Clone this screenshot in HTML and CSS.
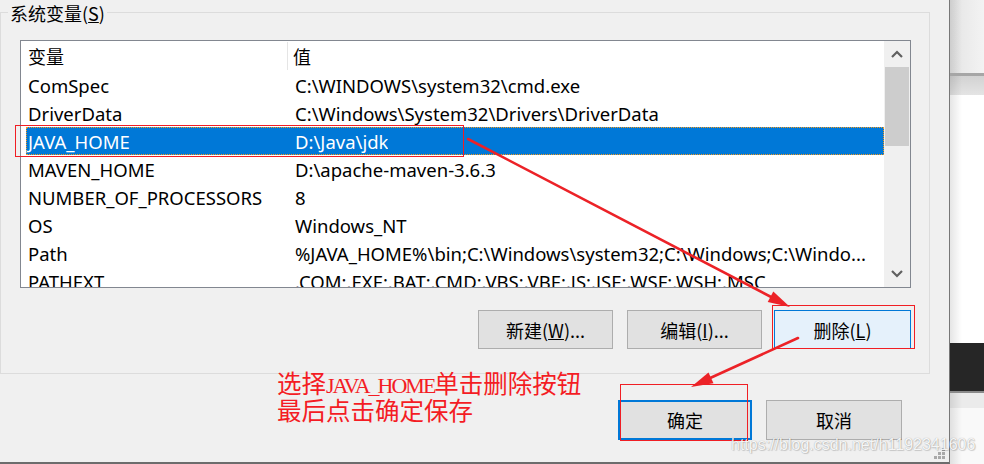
FILE: index.html
```html
<!DOCTYPE html>
<html lang="zh-CN">
<head>
<meta charset="utf-8">
<title>系统变量</title>
<link rel="stylesheet" href="styles.css">
</head>
<body>
<div class="screen">
  <div class="dialog">
    <div class="group">
      <div class="legend">系统变量(<u>S</u>)</div>
      <div class="list">
        <div class="list-body">
          <div class="list-head">
            <div class="hcell c1">变量</div>
            <div class="hcell c2">值</div>
          </div>
          <div class="row"><div class="cell c1">ComSpec</div><div class="cell c2">C:\WINDOWS\system32\cmd.exe</div></div>
          <div class="row"><div class="cell c1">DriverData</div><div class="cell c2">C:\Windows\System32\Drivers\DriverData</div></div>
          <div class="row selected"><div class="cell c1">JAVA_HOME</div><div class="cell c2">D:\Java\jdk</div></div>
          <div class="row"><div class="cell c1">MAVEN_HOME</div><div class="cell c2">D:\apache-maven-3.6.3</div></div>
          <div class="row"><div class="cell c1">NUMBER_OF_PROCESSORS</div><div class="cell c2">8</div></div>
          <div class="row"><div class="cell c1">OS</div><div class="cell c2">Windows_NT</div></div>
          <div class="row"><div class="cell c1">Path</div><div class="cell c2">%JAVA_HOME%\bin;C:\Windows\system32;C:\Windows;C:\Windo...</div></div>
          <div class="row"><div class="cell c1">PATHEXT</div><div class="cell c2">.COM;.EXE;.BAT;.CMD;.VBS;.VBE;.JS;.JSE;.WSF;.WSH;.MSC</div></div>
        </div>
        <div class="vscroll">
          <div class="sb-btn"><svg width="12" height="8" viewBox="0 0 12 8"><polyline points="1,7 6,2 11,7" fill="none" stroke="#606060" stroke-width="2.2"/></svg></div>
          <div class="sb-track"><div class="sb-thumb"></div></div>
          <div class="sb-btn"><svg width="12" height="8" viewBox="0 0 12 8"><polyline points="1,1 6,6 11,1" fill="none" stroke="#606060" stroke-width="2.2"/></svg></div>
        </div>
      </div>
      <div class="group-buttons">
        <button class="btn btn-new">新建(<u>W</u>)...</button>
        <button class="btn btn-edit">编辑(<u>I</u>)...</button>
        <button class="btn btn-del btn-hot">删除(<u>L</u>)</button>
      </div>
    </div>
    <div class="dialog-buttons">
      <button class="btn btn-ok btn-default">确定</button>
      <button class="btn btn-cancel">取消</button>
    </div>
    <svg class="grip" width="12" height="12" viewBox="0 0 12 12">
      <rect x="8" y="0" width="3" height="3" fill="#a9a9a9"/>
      <rect x="4" y="4" width="3" height="3" fill="#a9a9a9"/>
      <rect x="8" y="4" width="3" height="3" fill="#a9a9a9"/>
      <rect x="0" y="8" width="3" height="3" fill="#a9a9a9"/>
      <rect x="4" y="8" width="3" height="3" fill="#a9a9a9"/>
      <rect x="8" y="8" width="3" height="3" fill="#a9a9a9"/>
    </svg>
  </div>
  <div class="backwin">
    <div class="bw bw-title"></div>
    <div class="bw bw-line"></div>
    <div class="bw bw-bar"></div>
    <div class="bw bw-white"></div>
    <div class="bw bw-dark"></div>
    <div class="bw bw-line2"></div>
    <div class="bw bw-band"></div>
    <div class="bw bw-rest"></div>
  </div>

  <svg class="annot" width="984" height="464" viewBox="0 0 984 464">
    <rect x="15.5" y="125.5" width="448" height="31" fill="none" stroke="#f01e24" stroke-width="1"/>
    <rect x="772.5" y="305.5" width="142" height="43" fill="none" stroke="#f01e24" stroke-width="1"/>
    <rect x="620.5" y="384.5" width="127" height="56" fill="none" stroke="#f01e24" stroke-width="1"/>
    <line x1="468" y1="139" x2="774" y2="298.5" stroke="#ec2227" stroke-width="2.6" stroke-linecap="round"/>
    <polygon points="790,307 767.7,302.1 773.3,291.5" fill="#ec2227"/>
    <line x1="798" y1="338" x2="708" y2="379" stroke="#ec2227" stroke-width="2.6" stroke-linecap="round"/>
    <polygon points="691,387 708.5,372.4 713.5,383.3" fill="#ec2227"/>
  </svg>
  <div class="note">
    <div>选择<span class="lat">JAVA_HOME</span>单击删除按钮</div>
    <div>最后点击确定保存</div>
  </div>
  <div class="watermark">https://blog.csdn.net/h1192341606</div>
</div>
</body>
</html>
```
FILE: styles.css
```css
* { box-sizing: border-box; }
html, body { margin: 0; padding: 0; }
body {
  width: 984px;
  height: 464px;
  overflow: hidden;
  background: #f0f0f0;
  font-family: "Noto Sans", "Noto Sans CJK SC", sans-serif;
  color: #000;
}
.screen {
  position: relative;
  display: flex;
  width: 984px;
  height: 464px;
  overflow: hidden;
}
.dialog {
  position: relative;
  flex: none;
  width: 950px;
  height: 464px;
  background: #f0f0f0;
  border-right: 1px solid #777;
  border-bottom: 2px solid #6c6c6c;
}
.group {
  margin-top: 12px;
  width: 930px;
  border: 1px solid #dcdcdc;
  padding: 0 18px 24px 19px;
}
.legend {
  width: max-content;
  height: 24px;
  margin: -12px 0 0 -12px;
  padding: 0 2px;
  background: #f0f0f0;
  font-family: "Noto Sans CJK SC", sans-serif;
  font-size: 18px;
  line-height: 24px;
}
.list {
  margin-top: 15px;
  height: 248px;
  border: 1px solid #828790;
  background: #fff;
  display: flex;
}
.list-body {
  flex: 1;
  min-width: 0;
  padding-left: 5px;
  overflow: hidden;
}
.list-head {
  display: flex;
  height: 30px;
  font-family: "Noto Sans CJK SC", sans-serif;
  font-size: 18px;
  line-height: 28px;
}
.hcell.c1 {
  width: 262px;
  flex: none;
  margin: 1px 0;
  padding-left: 2px;
  border-right: 1px solid #e5e5e5;
}
.hcell.c2 {
  padding-left: 5px;
  margin: 1px 0;
}
.row {
  display: flex;
  height: 28px;
  border: 1px solid transparent;
  font-size: 18.5px;
  line-height: 26px;
  white-space: nowrap;
}
.row .cell {
  padding-top: 1px;
}
.row .c1 {
  width: 260px;
  flex: none;
  padding-left: 1px;
}
.row .c2 {
  padding-left: 8px;
  overflow: hidden;
}
.row.selected {
  background: #0078d7;
  color: #fff;
  border: 1px dotted #f39a1e;
}
.vscroll {
  width: 26px;
  flex: none;
  background: #f0f0f0;
  display: flex;
  flex-direction: column;
}
.sb-btn {
  height: 26px;
  display: flex;
  align-items: center;
  justify-content: center;
}
.sb-track {
  flex: 1;
  padding: 0 1px;
}
.sb-thumb {
  height: 79px;
  background: #cdcdcd;
}
.group-buttons {
  margin-top: 22px;
  display: flex;
  justify-content: flex-end;
}
.btn {
  height: 39px;
  padding: 0;
  border: 1px solid #adadad;
  background: #e1e1e1;
  color: #000;
  font-family: "Noto Sans CJK SC", sans-serif;
  font-size: 18px;
  line-height: 1;
}
.btn-new { width: 135px; margin-right: 14px; }
.btn-edit { width: 135px; margin-right: 12px; }
.btn-del { width: 137px; }
.btn-hot {
  background: #e5f1fb;
  border-color: #0078d7;
}
.dialog-buttons {
  margin-top: 26px;
  padding-right: 47px;
  display: flex;
  justify-content: flex-end;
  gap: 14px;
}
.dialog-buttons .btn { height: 40px; }
.btn-ok { width: 134px; }
.btn-cancel { width: 136px; }
.btn-default {
  border: 2px solid #0078d7;
}
.grip {
  position: absolute;
  right: 3px;
  bottom: 2px;
}
.backwin {
  flex: 1;
  display: flex;
  flex-direction: column;
}
.bw {
  flex: none;
}
.bw-title { height: 73px; background: linear-gradient(to right, rgba(0,0,0,0.10), rgba(0,0,0,0) 12px), linear-gradient(to right, #e4e4e4, #f3f3f3); }
.bw-line { height: 3px; background: #a6a6a6; }
.bw-bar { height: 19px; background: linear-gradient(to right, rgba(0,0,0,0.10), rgba(0,0,0,0) 12px), linear-gradient(to bottom, #d2d2d2, #e4e4e4); }
.bw-white { height: 248px; background: linear-gradient(to right, rgba(0,0,0,0.10), rgba(0,0,0,0) 12px), #ffffff; }
.bw-dark { height: 48px; background: #262626; }
.bw-line2 { height: 2px; background: #8a8a8a; }
.bw-band { height: 15px; background: linear-gradient(to right, rgba(0,0,0,0.10), rgba(0,0,0,0) 12px), #ebebeb; }
.bw-rest { flex: 1; background: linear-gradient(to right, rgba(0,0,0,0.10), rgba(0,0,0,0) 12px), #f9f9f9; }
.annot {
  position: absolute;
  left: 0;
  top: 0;
  pointer-events: none;
}
.note {
  position: absolute;
  left: 277px;
  top: 371px;
  color: #f41c24;
  font-family: "Noto Sans CJK SC", sans-serif;
  font-size: 24.5px;
  line-height: 24px;
  white-space: nowrap;
}
.note .lat {
  font-family: "Liberation Serif", serif;
  font-size: 22px;
  letter-spacing: -2px;
}
.watermark {
  position: absolute;
  left: 731px;
  top: 435px;
  font-family: "Liberation Sans", sans-serif;
  font-size: 16px;
  line-height: 20px;
  color: rgba(255,255,255,0.92);
  text-shadow: 0 0 1px rgba(0,0,0,0.35), 1px 1px 1px rgba(0,0,0,0.15);
  white-space: nowrap;
}
```
